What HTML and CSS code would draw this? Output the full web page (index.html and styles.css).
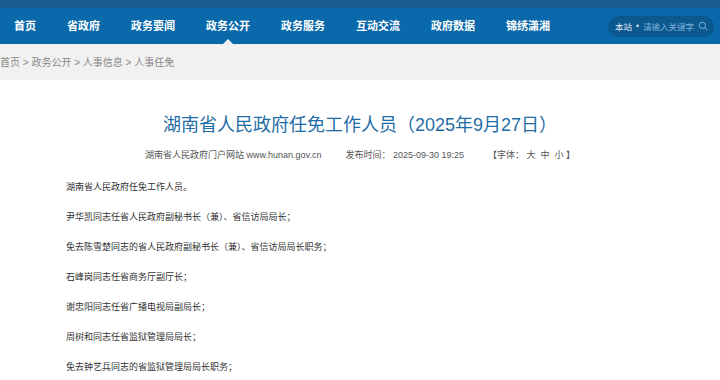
FILE: index.html
```html
<!DOCTYPE html>
<html lang="zh-CN">
<head>
    <meta charset="UTF-8">
    <meta name="viewport" content="width=device-width, initial-scale=1.0">
    <title>湖南省人民政府任免工作人员</title>
    <link rel="stylesheet" href="styles.css">
</head>
<body>
    <div class="top-strip"></div>

    <div class="navbar">
        <a href="#">首页</a>
        <a href="#">省政府</a>
        <a href="#">政务要闻</a>
        <a href="#" class="active">政务公开</a>
        <a href="#">政务服务</a>
        <a href="#">互动交流</a>
        <a href="#">政府数据</a>
        <a href="#">锦绣潇湘</a>
        <div class="search">
            <span class="scope">本站</span>
            <span class="dot">•</span>
            <span class="hint">请输入关键字</span>
            <svg class="search-icon" viewBox="0 0 16 16" width="10" height="10">
                <circle cx="7" cy="7" r="5" fill="none" stroke="#7fb4dc" stroke-width="1.6"/>
                <line x1="10.6" y1="10.6" x2="14.5" y2="14.5" stroke="#7fb4dc" stroke-width="1.6" stroke-linecap="round"/>
            </svg>
        </div>
    </div>

    <div class="crumbs">
        首页 &gt; 政务公开 &gt; 人事信息 &gt; 人事任免
    </div>

    <div class="article">
        <h1 class="title">湖南省人民政府任免工作人员（2025年9月27日）</h1>
        <div class="meta">
            <span>湖南省人民政府门户网站 www.hunan.gov.cn</span>
            <span>发布时间： 2025-09-30 19:25</span>
            <span>【字体： 大&nbsp;&nbsp;中&nbsp;&nbsp;小 】</span>
        </div>
        <div class="content">
            <p>湖南省人民政府任免工作人员。</p>
            <p>尹华凯同志任省人民政府副秘书长（兼）、省信访局局长；</p>
            <p>免去陈雪楚同志的省人民政府副秘书长（兼）、省信访局局长职务；</p>
            <p>石峰岗同志任省商务厅副厅长；</p>
            <p>谢忠阳同志任省广播电视局副局长；</p>
            <p>周树和同志任省监狱管理局局长；</p>
            <p>免去钟艺兵同志的省监狱管理局局长职务；</p>
        </div>
    </div>
</body>
</html>
```

FILE: styles.css
```css
html, body {
    overflow: hidden;
}

body {
    margin: 0;
    font-family: "Liberation Sans", "Noto Sans CJK SC", sans-serif;
    background: #fff;
    color: #333;
}

.top-strip {
    height: 8px;
    background-color: #185d8e;
}

.navbar {
    height: 36px;
    background-color: #0a69aa;
    display: flex;
    align-items: center;
    gap: 31px;
    padding-left: 14px;
    padding-right: 6px;
}

.navbar a {
    position: relative;
    height: 36px;
    line-height: 36px;
    color: #fff;
    font-size: 11px;
    font-weight: bold;
    text-decoration: none;
}

.navbar a.active::after {
    content: "";
    position: absolute;
    left: 50%;
    bottom: 0;
    margin-left: -5px;
    border-left: 5px solid transparent;
    border-right: 5px solid transparent;
    border-bottom: 5px solid #f1f1f1;
}

.search {
    margin-left: auto;
    width: 106px;
    height: 21px;
    box-sizing: border-box;
    border-radius: 11px;
    background-color: #0c5990;
    display: flex;
    align-items: center;
    padding: 0 6px 0 7px;
    font-size: 8.5px;
}

.search .scope {
    color: #e4eef6;
}

.search .dot {
    color: #cfe0ee;
    margin: 0 4px;
}

.search .hint {
    color: #7fb0d6;
}

.search-icon {
    margin-left: auto;
}

.crumbs {
    height: 36px;
    line-height: 36px;
    background-color: #f1f1f1;
    border-top: 1px solid #e6eef2;
    box-sizing: border-box;
    font-size: 10px;
    color: #888;
    padding-left: 0;
}

.article {
    padding: 33px 66px 0;
}

.title {
    margin: 0;
    text-align: center;
    font-size: 18px;
    line-height: 24px;
    font-weight: normal;
    color: #1f6da6;
}

.meta {
    margin-top: 11px;
    display: flex;
    justify-content: center;
    gap: 24px;
    font-size: 9px;
    line-height: 14px;
    color: #555;
}

.content {
    margin-top: 10px;
    font-size: 9px;
    color: #333;
}

.content p {
    margin: 0;
    line-height: 30px;
}
```
